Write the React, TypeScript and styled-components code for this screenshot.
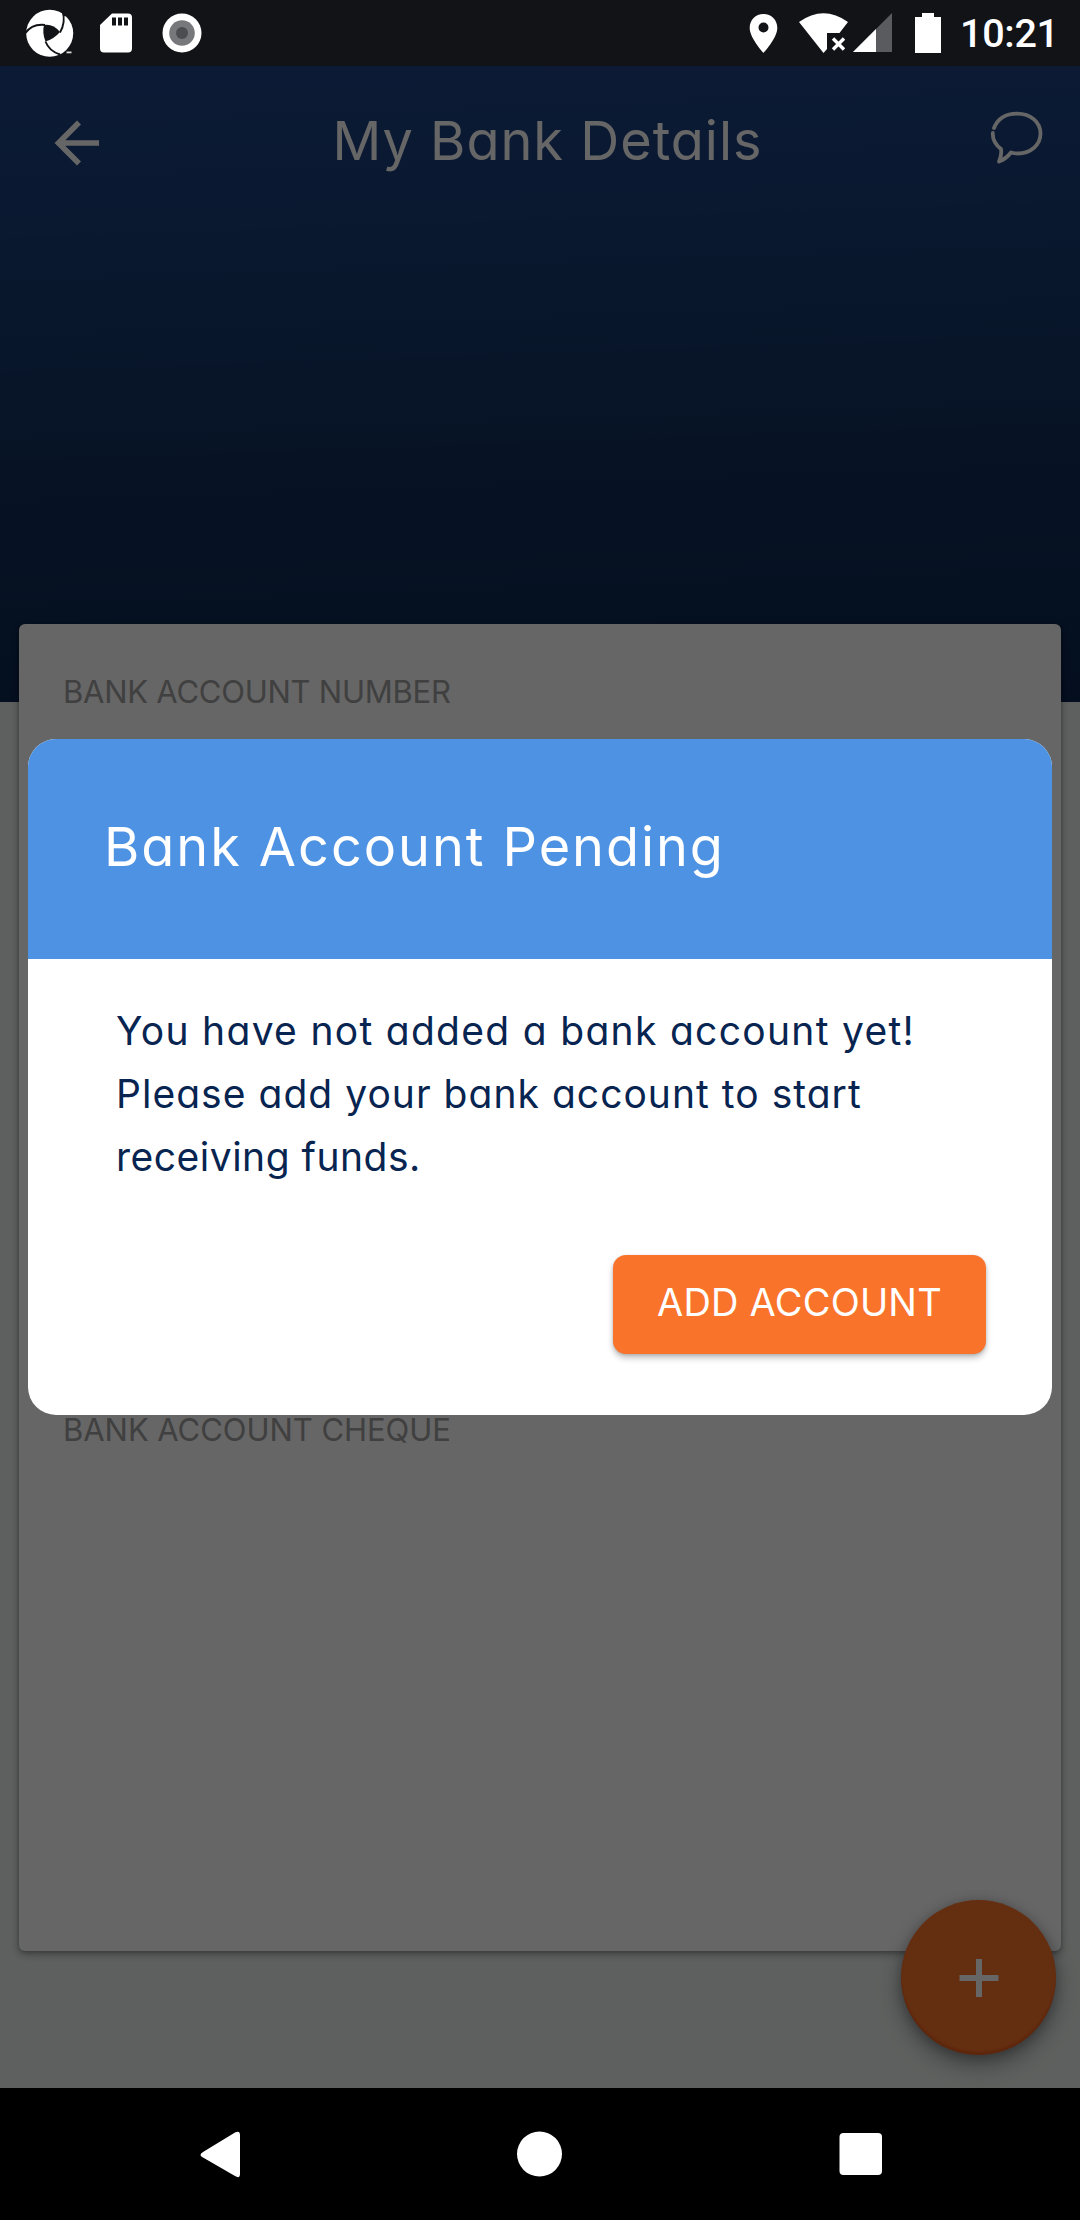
import React from "react";
import styled, { createGlobalStyle } from "styled-components";

const Global = createGlobalStyle`
  * { box-sizing: border-box; }
  body { margin: 0; background: #000; font-family: Inter, "Open Sans", sans-serif; font-feature-settings: "cv11" 1; }
`;

const Screen = styled.div`
  position: relative;
  width: 1080px;
  height: 2220px;
  overflow: hidden;
  display: flex;
  flex-direction: column;
`;
const StatusBar = styled.header`
  height: 66px;
  flex: none;
  background: #121317;
  display: flex;
  justify-content: space-between;
`;
const Content = styled.main`
  position: relative;
  flex: 1;
  min-height: 0;
  background: #ebf0ed;
  display: flex;
  flex-direction: column;
`;
const Hero = styled.section`
  height: 636px;
  flex: none;
  background: linear-gradient(178deg, #204486 0%, #193e78 25%, #12305c 62%, #0a244c 100%);
`;
const AppBar = styled.div`
  height: 150px;
  padding: 0 33px 0 46px;
  display: flex;
  justify-content: space-between;
  align-items: center;
`;
const Text = styled.span<{ $size: number; $color: string; $track?: number; $line: number }>`
  display: block;
  margin: 0;
  white-space: nowrap;
  font-size: ${(p) => p.$size}px;
  line-height: ${(p) => p.$line}px;
  color: ${(p) => p.$color};
  letter-spacing: ${(p) => p.$track ?? 0}px;
  font-weight: 400;
`;
const Card = styled.section`
  width: 1042px;
  height: 1327px;
  flex: none;
  margin: -78px 0 0 19px;
  padding: 43px 44px;
  background: #fff;
  border-radius: 6px;
  box-shadow: 0 3px 9px rgba(0, 0, 0, 0.32), 0 1px 4px rgba(0, 0, 0, 0.2);
  display: flex;
  flex-direction: column;
  gap: 689px;
`;
const Fab = styled.button`
  position: absolute;
  right: 24px;
  bottom: 33px;
  width: 155px;
  height: 155px;
  padding: 0;
  border: 0;
  border-radius: 50%;
  background: #fb732b;
  display: grid;
  place-items: center;
  box-shadow: 0 10px 22px rgba(0, 0, 0, 0.36), 0 2px 12px rgba(0, 0, 0, 0.2), inset 0 -3px 2px rgba(200, 60, 10, 0.35);
`;
const Scrim = styled.div`
  position: absolute;
  inset: 0;
  background: rgba(0, 0, 0, 0.6);
  padding: 673px 28px 0;
`;
const Dialog = styled.section`
  height: 676px;
  border-radius: 28px;
  overflow: hidden;
  background: #fff;
  display: flex;
  flex-direction: column;
`;
const DialogHead = styled.div`
  height: 220px;
  flex: none;
  padding: 73px 0 0 76px;
  background: #4e92e3;
`;
const DialogBody = styled.div`
  padding: 40px 0 0 88px;
`;
const Actions = styled.div`
  display: flex;
  justify-content: flex-end;
  padding: 67px 66px 0 0;
`;
const AddButton = styled.button`
  width: 373px;
  height: 99px;
  padding: 0 0 5px;
  border: 0;
  border-radius: 13px;
  background: #f9732b;
  font-family: inherit;
  font-feature-settings: inherit;
  display: grid;
  place-items: center;
  box-shadow: 0 4px 6px rgba(0, 0, 0, 0.24), 0 1px 3px rgba(0, 0, 0, 0.14);
`;
const NavBar = styled.nav`
  height: 132px;
  flex: none;
  background: #000;
`;

const StatusIconsLeft = () => (
  <svg width="220" height="66" viewBox="0 0 220 66">
    <circle cx="49.700" cy="33.300" r="23.500" fill="#fff" />
    <path d="M44 25Q53 23.500 60 32Q54 39 45.500 41.500Q42 33 44 25Z" fill="#121317" />
    <g fill="none" stroke="#121317" strokeWidth="1.900">
      <path d="M25 33.500Q32 23.500 45 25" />
      <path d="M60 32.500Q66 22 62.500 11" />
      <path d="M45.500 41.500Q49 51 60 54.500" />
    </g>
    <path d="M62 9l8 8-6-1z" fill="#121317" />
    <path d="M66.500 51.500h5v1.800h-5z" fill="#ddd" />
    <path d="M112 13.500h16q4 0 4 4v31q0 4-4 4h-24q-4 0-4-4V25z" fill="#fff" />
    <path d="M112 17.500h4v8h-4zM118 17.500h4v8h-4zM124 17.500h4v8h-4z" fill="#121317" />
    <circle cx="182" cy="33" r="19.500" fill="#fff" />
    <circle cx="182" cy="33" r="12.800" fill="#77787b" />
    <circle cx="182" cy="33" r="6" fill="#4c4d50" />
  </svg>
);

const StatusIconsRight = () => (
  <svg width="220" height="66" viewBox="740 0 220 66">
    <path fillRule="evenodd" fill="#fff" d="M763.500 14C755.500 14 749.700 20 749.700 28C749.700 38 763.500 53 763.500 53S777.300 38 777.300 28C777.300 20 771.500 14 763.500 14ZM763.500 22.500a5 5 0 1 1 0 10a5 5 0 0 1 0-10Z" />
    <path fill="#fff" d="M799 22Q823.500 4.500 848 22L839.500 33H827V49L823.500 53Z" />
    <path d="M833 38.500l11 11M844 38.500l-11 11" stroke="#fff" strokeWidth="3.400" />
    <path fill="#5a5b5e" d="M892 13V52H853Z" />
    <path fill="#fff" d="M876 29V52H853Z" />
    <path fill="#fff" d="M922 13h12v4h7v36h-26V17h7z" />
  </svg>
);

const Clock = styled.div`
  display: flex;
  width: 340px;
  font: 500 39.500px/68px Roboto, sans-serif;
  letter-spacing: -0.3px;
  color: #fff;
`;

const BackIcon = () => (
  <svg width="62" height="60" viewBox="46 111 62 60" fill="none" stroke="#fff" strokeWidth="5.600">
    <path d="M99 143H59M79 122.500L58.500 143L79 163.500" />
  </svg>
);
const ChatIcon = () => (
  <svg width="60" height="60" viewBox="987 111 60 60" fill="none" stroke="#fff" strokeWidth="3.800" strokeLinecap="round" strokeLinejoin="round">
    <path d="M994 128C998 118 1007 113.600 1017 113.600C1031 113.600 1040.500 122.500 1040.500 133.500C1040.500 145.500 1030 153.500 1018 153.500Q1014 153.500 1011 152.500Q1006 159 999 161.500Q1002 155 1001 149C996 145 992.500 139 992.800 133" />
  </svg>
);
const PlusIcon = () => (
  <svg width="40" height="40" viewBox="0 0 40 40" stroke="#fff" strokeWidth="6">
    <path d="M20 1V39M.5 20H39.500" />
  </svg>
);

const message = [
  { text: "You have not added a bank account yet!", track: 1.3 },
  { text: "Please add your bank account to start", track: 1.03 },
  { text: "receiving funds.", track: 0.5 },
];

export default function App() {
  return (
    <Screen>
      <Global />
      <StatusBar>
        <StatusIconsLeft />
        <Clock>
          <StatusIconsRight />
          <span>10:21</span>
        </Clock>
      </StatusBar>
      <Content>
        <Hero>
          <AppBar>
            <BackIcon />
            <Text as="h1" $size={54} $line={70} $color="#fff" $track={1}>My Bank Details</Text>
            <ChatIcon />
          </AppBar>
        </Hero>
        <Card>
          <Text $size={31} $line={49} $color="#a0a0a0" $track={-0.25}>BANK ACCOUNT NUMBER</Text>
          <Text $size={31} $line={49} $color="#a0a0a0" $track={-0.05}>BANK ACCOUNT CHEQUE</Text>
        </Card>
        <Fab aria-label="Add"><PlusIcon /></Fab>
        <Scrim>
          <Dialog>
            <DialogHead>
              <Text as="h2" $size={54} $line={70} $color="#fff" $track={1.95}>Bank Account Pending</Text>
            </DialogHead>
            <DialogBody>
              {message.map((m) => (
                <Text key={m.text} $size={39} $line={63} $color="#082450" $track={m.track}>{m.text}</Text>
              ))}
            </DialogBody>
            <Actions>
              <AddButton>
                <Text $size={38} $line={50} $color="#fff" $track={0.2}>ADD ACCOUNT</Text>
              </AddButton>
            </Actions>
          </Dialog>
        </Scrim>
      </Content>
      <NavBar>
        <svg width="1080" height="132" viewBox="0 2088 1080 132" fill="#fff">
          <path d="M203 2152L235 2132.500Q240 2130 240 2135V2174Q240 2179 235 2176L203 2157.500Q198 2155 203 2152Z" />
          <circle cx="539.500" cy="2154" r="22.500" />
          <rect x="839.500" y="2133" width="42.500" height="42" rx="4" />
        </svg>
      </NavBar>
    </Screen>
  );
}
